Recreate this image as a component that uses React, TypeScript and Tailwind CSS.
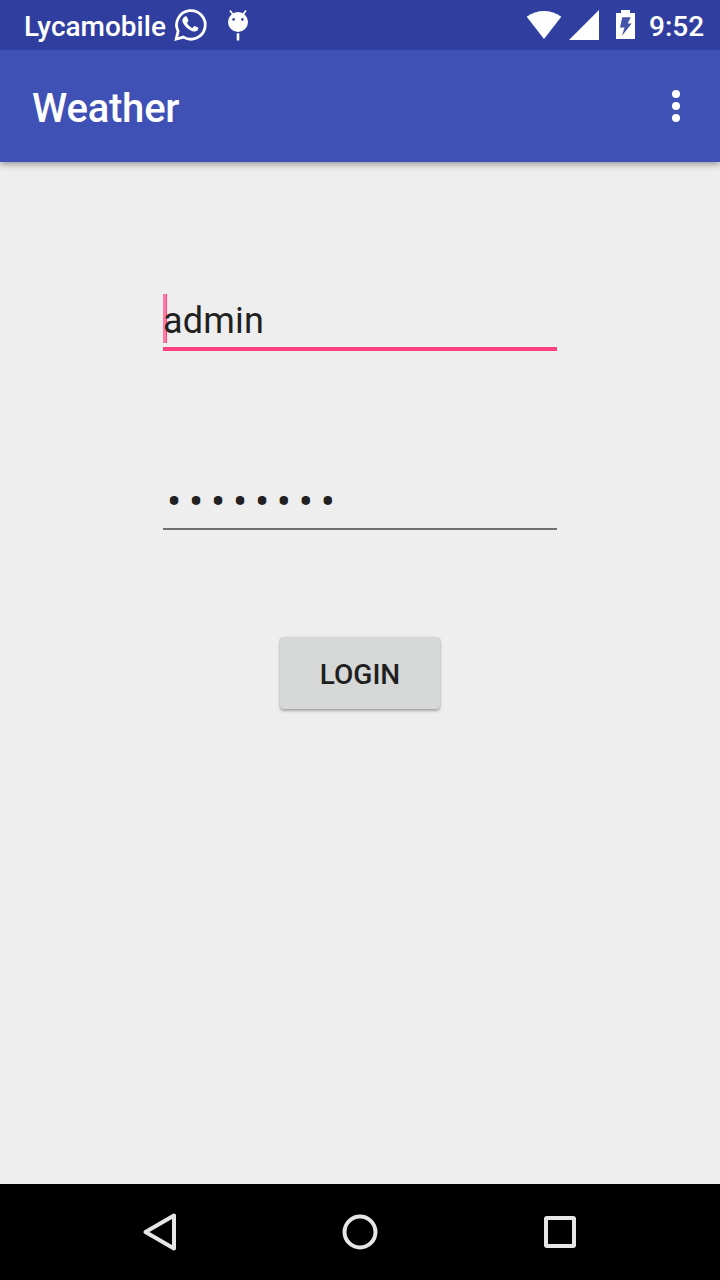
function StatusBar() {
  return (
    <header className="relative z-10 flex h-[50px] items-start bg-[#303f9f] text-[28px] font-medium leading-[50px] text-white">
      <span className="ml-6 w-[148px] shrink-0 whitespace-nowrap pt-[2px]">Lycamobile</span>
      <svg className="h-[50px] w-9 shrink-0" viewBox="172.5 0.5 36 50" fill="none">
        <path d="M176.7 39.6L178.6 31.7A14.3 14.3 0 1 1 184 37.6Z" stroke="white" strokeWidth="2.8" strokeLinejoin="miter" />
        <path d="M185.2 17.2C186.3 16.5 187.2 16.8 187.6 17.8L188.9 20.8C189.2 21.6 188 22.6 187.5 23.4C188.8 25.8 190.5 27.4 193 28.4C193.9 27.6 194.4 26.2 195.3 26.5L198.5 28.1C199.3 28.6 198.7 30.2 197.9 31C196.6 32.1 194.7 32.4 192.8 31.7C188.3 30 184.9 26.8 183.1 22.6C182.3 20.5 183.2 18.5 185.2 17.2Z" fill="white" />
      </svg>
      <svg className="ml-4 h-[50px] w-7 shrink-0" viewBox="224 0 28 50">
        <path d="M230 10.4L233 14.5M246 10.4L243 14.5" stroke="white" strokeWidth="1.7" />
        <circle cx="238" cy="22" r="10" fill="white" />
        <circle cx="233.6" cy="19.4" r="1.3" fill="#303f9f" />
        <circle cx="242.4" cy="19.4" r="1.3" fill="#303f9f" />
        <rect x="236.7" y="33.3" width="2.6" height="7.2" fill="white" />
      </svg>
      <svg className="ml-auto h-[50px] w-[38px] shrink-0" viewBox="525 0 38 50">
        <path d="M526.7 16.8C537 9.1 551 9.1 561.3 16.8L544 39Z" fill="white" />
      </svg>
      <svg className="ml-1 h-[50px] w-9 shrink-0" viewBox="567 0 36 50">
        <path d="M599 10V40H569Z" fill="white" />
      </svg>
      <svg className="ml-[9px] h-[50px] w-[26px] shrink-0" viewBox="612 0 26 50">
        <path d="M621 10H630V13H635V39H616V13H621Z" fill="white" />
        <path d="M622.3 17.2H630.8L627.7 23.4H631.7L622 35.8L624.5 27.4H620Z" fill="#303f9f" opacity=".9" />
      </svg>
      <time className="ml-[11px] w-[71px] shrink-0 whitespace-nowrap pt-[2px]">9:52</time>
    </header>
  );
}

function AppBar() {
  return (
    <div className="relative flex h-28 items-center justify-between bg-[#3f51b5] pl-8 pr-10 text-white shadow-[0_2px_7px_rgba(0,0,0,0.4)]">
      <h1 className="pt-[6px] text-[40px] font-medium leading-none tracking-[-0.2px]">Weather</h1>
      <button aria-label="More options" className="flex flex-col gap-1">
        <span className="size-2 rounded-full bg-white" />
        <span className="size-2 rounded-full bg-white" />
        <span className="size-2 rounded-full bg-white" />
      </button>
    </div>
  );
}

function LoginForm() {
  return (
    <main className="flex flex-1 flex-col items-center text-[#212121]">
      <div className="relative mt-[132px] flex h-[57px] w-[394px] border-b-4 border-[#ff4081] text-[36px] leading-[55px]">
        <span className="absolute left-0 top-0 h-[49px] w-1 border-r border-[#ff4081] bg-[#ff79a6]" />
        <span className="relative tracking-[0.2px]">admin</span>
      </div>
      <div className="mt-[123px] flex h-[56px] w-[394px] border-b-2 border-[#6f6f6f] text-[42px] leading-[56px]">
        <span className="pl-[4px] tracking-[7.8px]">••••••••</span>
      </div>
      <button className="mt-[107px] h-[72px] w-40 rounded-[4px] bg-[#d6d7d7] pt-[3px] text-[28px] font-medium text-[#1e1f1f] shadow-[0_2px_3px_rgba(0,0,0,0.3),0_0_2px_rgba(0,0,0,0.12)]">
        LOGIN
      </button>
    </main>
  );
}

function NavigationBar() {
  return (
    <nav className="flex h-24 items-center justify-center gap-[160px] bg-black">
      <svg className="size-10" viewBox="140 1212 40 40" fill="none" stroke="#e6e6e6" strokeWidth="4" strokeLinejoin="round">
        <path d="M145.5 1232L174 1215.5V1248.5Z" />
      </svg>
      <svg className="size-10" viewBox="0 0 40 40" fill="none" stroke="#e6e6e6" strokeWidth="4">
        <circle cx="20" cy="20" r="15.5" />
      </svg>
      <svg className="size-10" viewBox="0 0 40 40" fill="none" stroke="#e6e6e6" strokeWidth="4">
        <rect x="6" y="6" width="28" height="28" rx="1" />
      </svg>
    </nav>
  );
}

export default function App() {
  return (
    <div className="flex h-[1280px] w-[720px] flex-col overflow-hidden bg-[#eeeeee] font-[Roboto,sans-serif]">
      <StatusBar />
      <AppBar />
      <LoginForm />
      <NavigationBar />
    </div>
  );
}
